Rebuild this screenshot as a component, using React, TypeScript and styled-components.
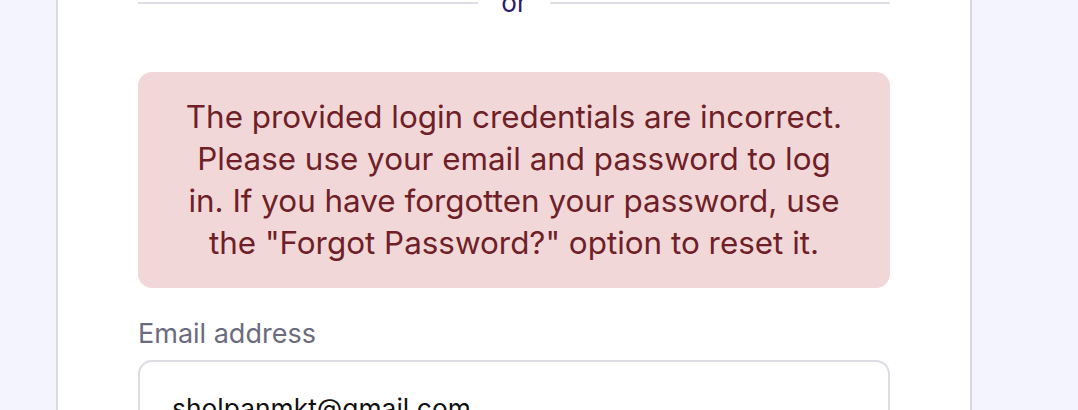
import React from "react";
import styled, { createGlobalStyle } from "styled-components";

const GlobalStyle = createGlobalStyle`
  html, body {
    margin: 0;
    padding: 0;
    background: #f4f4fe;
    overflow: hidden;
    height: 410px;
  }
  * { box-sizing: border-box; }
`;

const Page = styled.div`
  width: 1078px;
  height: 410px;
  overflow: hidden;
  background: #f4f4fe;
  font-family: Inter, "Liberation Sans", sans-serif;
`;

const Card = styled.div`
  margin-left: 56px;
  width: 916px;
  height: 460px;
  background: #ffffff;
  border-left: 2px solid #d9d9e2;
  border-right: 2px solid #d9d9e2;
  padding: 0 80px;
  display: flex;
  flex-direction: column;
`;

const Divider = styled.div`
  display: flex;
  align-items: center;
  margin-top: -14px;
  height: 34px;
`;

const Rule = styled.div`
  flex: 1;
  height: 2px;
  background: #dcdce4;
`;

const OrText = styled.span`
  padding: 0 23px;
  font-size: 26px;
  line-height: 34px;
  color: #2b1b68;
`;

const Alert = styled.div`
  margin-top: 52px;
  background: #f2d7d9;
  border-radius: 14px;
  padding: 24px 47px;
  text-align: center;
  color: #6e1f27;
  font-size: 31.4px;
  line-height: 42px;
`;

const Label = styled.label`
  margin-top: 28px;
  font-size: 27px;
  line-height: 36px;
  color: #6b6b7e;
`;

const Input = styled.div`
  margin-top: 8px;
  height: 80px;
  border: 2px solid #dcdce4;
  border-radius: 14px;
  padding: 28px 32px 0;
  font-size: 26.4px;
  line-height: 36px;
  color: #111111;
`;

export default function App() {
  return (
    <Page>
      <GlobalStyle />
      <Card>
        <Divider>
          <Rule />
          <OrText>or</OrText>
          <Rule />
        </Divider>
        <Alert>
          The provided login credentials are incorrect. Please use your email and
          password to log in. If you have forgotten your password, use the
          "Forgot Password?" option to reset it.
        </Alert>
        <Label>Email address</Label>
        <Input>sholpanmkt@gmail.com</Input>
      </Card>
    </Page>
  );
}
